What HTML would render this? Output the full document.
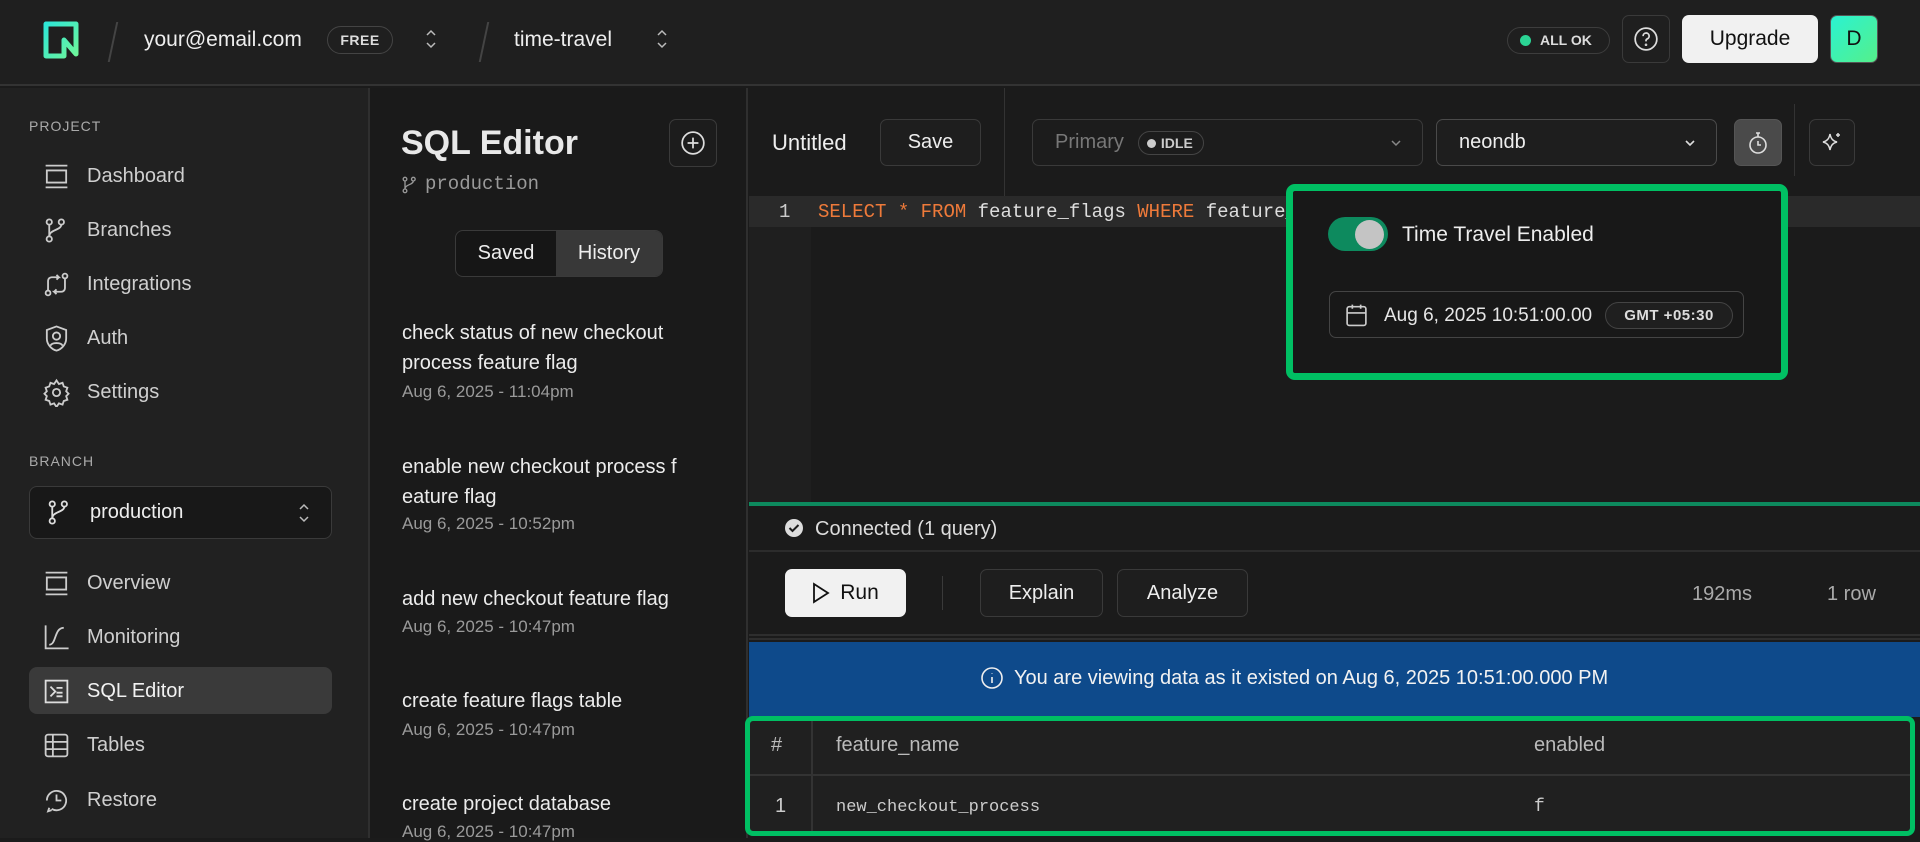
<!DOCTYPE html>
<html><head><meta charset="utf-8"><style>
*{box-sizing:border-box;margin:0;padding:0}
body{width:1920px;height:838px;overflow:hidden;background:#1b1b1b;font-family:"Liberation Sans",sans-serif;color:#e8e8e8;position:relative}
.a{position:absolute}
.mono{font-family:"Liberation Mono",monospace}
.btn{position:absolute;border:1px solid #3a3a3a;border-radius:7px;background:#1e1e1e;display:flex;align-items:center;justify-content:center;font-size:20px;color:#eee}
svg{display:block}
.nav{position:absolute;left:42px;display:flex;align-items:center;gap:16px;font-size:20px;color:#cfcfcf}
.nav svg{width:29px;height:29px}
.hi{position:absolute;left:402px;font-size:20px;color:#ececec;line-height:30px}
.hd{position:absolute;left:402px;font-size:17px;color:#9a9a9a}
</style></head><body>
<!-- header -->
<div class="a" style="left:0;top:0;width:1920px;height:86px;background:#1f1f1f;border-bottom:2px solid #333"></div>
<svg class="a" style="left:42px;top:20px" width="40" height="40" viewBox="0 0 40 40"><defs><linearGradient id="g" x1="0" y1="0" x2="1" y2="1"><stop offset="0" stop-color="#2ee6d6"/><stop offset="1" stop-color="#6ef59a"/></linearGradient></defs><path d="M4 4h30v30l-12-14v16h-18z" fill="none" stroke="url(#g)" stroke-width="5" stroke-linejoin="round"/></svg>
<div class="a" style="left:112px;top:22px;width:2px;height:40px;background:#444;transform:skewX(-12deg)"></div>
<div class="a" style="left:144px;top:28px;font-size:21px;color:#eee">your@email.com</div>
<div class="a" style="left:327px;top:26px;width:66px;height:28px;border:1px solid #444;border-radius:14px;font-size:14px;font-weight:bold;color:#ddd;text-align:center;line-height:26px;letter-spacing:.5px">FREE</div>
<svg class="a" style="left:425px;top:28px" width="12" height="22" viewBox="0 0 12 22" fill="none" stroke="#bbb" stroke-width="1.5"><path d="M2 7l4-4 4 4M2 15l4 4 4-4"/></svg>
<div class="a" style="left:483px;top:22px;width:2px;height:40px;background:#444;transform:skewX(-12deg)"></div>
<div class="a" style="left:514px;top:28px;font-size:21px;color:#eee">time-travel</div>
<svg class="a" style="left:656px;top:28px" width="12" height="22" viewBox="0 0 12 22" fill="none" stroke="#bbb" stroke-width="1.5"><path d="M2 7l4-4 4 4M2 15l4 4 4-4"/></svg>
<div class="a" style="left:1507px;top:27px;width:103px;height:27px;border:1px solid #3d3d3d;border-radius:14px;font-size:14px;font-weight:bold;color:#ddd;line-height:25px;padding-left:32px">ALL OK</div>
<div class="a" style="left:1520px;top:35px;width:11px;height:11px;border-radius:50%;background:#2bd494"></div>
<div class="btn" style="left:1622px;top:15px;width:48px;height:48px;background:#1f1f1f"><svg width="26" height="26" viewBox="0 0 24 24" fill="none" stroke="#ddd" stroke-width="1.6"><circle cx="12" cy="12" r="10"/><path d="M9.3 9.3a2.8 2.8 0 1 1 3.8 2.6c-.8.3-1.1.9-1.1 1.7v.6"/><circle cx="12" cy="17.3" r=".4" fill="#ddd"/></svg></div>
<div class="a" style="left:1682px;top:15px;width:136px;height:48px;background:#f1f1f1;border-radius:7px;color:#111;font-size:21px;text-align:center;line-height:48px">Upgrade</div>
<div class="a" style="left:1830px;top:15px;width:48px;height:48px;border-radius:7px;background:linear-gradient(135deg,#2af2d2,#55f08a);border:1px solid #555;color:#111;font-size:21px;text-align:center;line-height:46px">D</div>

<!-- sidebar -->
<div class="a" style="left:0;top:88px;width:370px;height:750px;background:#212121;border-right:2px solid #2f2f2f"></div>
<div class="a" style="left:29px;top:118px;font-size:14px;letter-spacing:1px;color:#aaa">PROJECT</div>
<div class="nav" style="top:162px"><svg viewBox="0 0 24 24" fill="none" stroke="#ccc" stroke-width="1.5"><path d="M3 3h18M3 21h18M4 7h16v10H4z"/></svg>Dashboard</div>
<div class="nav" style="top:216px"><svg viewBox="0 0 24 24" fill="none" stroke="#ccc" stroke-width="1.5"><circle cx="6" cy="5" r="2.2"/><circle cx="16" cy="5" r="2.2"/><circle cx="6" cy="19" r="2.2"/><path d="M6 7v10M16 7c0 5-10 4-10 10"/></svg>Branches</div>
<div class="nav" style="top:270px"><svg viewBox="0 0 24 24" fill="none" stroke="#ccc" stroke-width="1.5"><circle cx="5" cy="19" r="2"/><circle cx="19" cy="5" r="2"/><path d="M5 17V9a3 3 0 0 1 3-3h6l-2-2M14 6l-2 2M19 7v8a3 3 0 0 1-3 3h-6l2 2M10 18l2-2"/></svg>Integrations</div>
<div class="nav" style="top:324px"><svg viewBox="0 0 24 24" fill="none" stroke="#ccc" stroke-width="1.5"><path d="M12 2l8 3v7c0 5-4 9-8 10-4-1-8-5-8-10V5z"/><circle cx="12" cy="10" r="3"/><path d="M7 18c1-3 9-3 10 0"/></svg>Auth</div>
<div class="nav" style="top:378px"><svg viewBox="0 0 24 24" fill="none" stroke="#ccc" stroke-width="1.5"><circle cx="12" cy="12" r="3"/><path d="M12 2l2 3 3-1 1 3 3 1-1 3 2 2-2 2 1 3-3 1-1 3-3-1-2 3-2-3-3 1-1-3-3-1 1-3-2-2 2-2-1-3 3-1 1-3 3 1z"/></svg>Settings</div>
<div class="a" style="left:29px;top:453px;font-size:14px;letter-spacing:1px;color:#aaa">BRANCH</div>
<div class="a" style="left:29px;top:486px;width:303px;height:53px;background:#181818;border:1px solid #3a3a3a;border-radius:8px"></div>
<div class="nav" style="top:498px;left:45px;color:#eee"><svg viewBox="0 0 24 24" fill="none" stroke="#ddd" stroke-width="1.5"><circle cx="6" cy="5" r="2.2"/><circle cx="16" cy="5" r="2.2"/><circle cx="6" cy="19" r="2.2"/><path d="M6 7v10M16 7c0 5-10 4-10 10"/></svg>production</div>
<svg class="a" style="left:298px;top:502px" width="12" height="22" viewBox="0 0 12 22" fill="none" stroke="#bbb" stroke-width="1.5"><path d="M2 7l4-4 4 4M2 15l4 4 4-4"/></svg>
<div class="nav" style="top:569px"><svg viewBox="0 0 24 24" fill="none" stroke="#ccc" stroke-width="1.5"><path d="M3 3h18M3 21h18M4 7h16v10H4z"/></svg>Overview</div>
<div class="nav" style="top:623px"><svg viewBox="0 0 24 24" fill="none" stroke="#ccc" stroke-width="1.5"><path d="M3 2v19h19M6 18c6 0 4-14 12-14"/></svg>Monitoring</div>
<div class="a" style="left:29px;top:667px;width:303px;height:47px;background:#3a3a3a;border-radius:8px"></div>
<div class="nav" style="top:677px;color:#f2f2f2"><svg viewBox="0 0 24 24" fill="none" stroke="#ddd" stroke-width="1.5"><rect x="3" y="3" width="18" height="18"/><path d="M7 8l4 4-4 4M12 9h5M12 13h5M12 16h5"/></svg>SQL Editor</div>
<div class="nav" style="top:731px"><svg viewBox="0 0 24 24" fill="none" stroke="#ccc" stroke-width="1.5"><rect x="3" y="3" width="18" height="18" rx="2"/><path d="M3 9h18M3 15h18M9 3v18"/></svg>Tables</div>
<div class="nav" style="top:786px"><svg viewBox="0 0 24 24" fill="none" stroke="#ccc" stroke-width="1.5"><path d="M4 12a8 8 0 1 1 4 7M8 20l-3 1 1-3M12 7v5h4"/></svg>Restore</div>

<!-- middle panel -->
<div class="a" style="left:370px;top:88px;width:378px;height:750px;background:#1a1a1a;border-right:2px solid #2f2f2f"></div>
<div class="a" style="left:401px;top:124px;font-size:34px;font-weight:bold;color:#e8e8e8">SQL Editor</div>
<div class="btn" style="left:669px;top:119px;width:48px;height:48px;background:#1c1c1c"><svg width="26" height="26" viewBox="0 0 24 24" fill="none" stroke="#ddd" stroke-width="1.6"><circle cx="12" cy="12" r="10"/><path d="M12 7v10M7 12h10"/></svg></div>
<svg class="a" style="left:400px;top:174px" width="20" height="22" viewBox="0 0 24 24" fill="none" stroke="#999" stroke-width="1.6"><circle cx="6" cy="5" r="2.2"/><circle cx="16" cy="5" r="2.2"/><circle cx="6" cy="19" r="2.2"/><path d="M6 7v10M16 7c0 5-10 4-10 10"/></svg>
<div class="a mono" style="left:425px;top:173px;font-size:19px;color:#9a9a9a">production</div>
<div class="a" style="left:455px;top:230px;width:208px;height:47px;border:1px solid #3a3a3a;border-radius:8px;background:#161616;overflow:hidden;display:flex;font-size:20px">
<div style="width:100px;text-align:center;line-height:45px;color:#eee">Saved</div><div style="flex:1;background:#383838;text-align:center;line-height:45px;color:#eee">History</div></div>
<div class="hi" style="top:318px">check status of new checkout<br>process feature flag</div>
<div class="hd" style="top:382px">Aug 6, 2025 - 11:04pm</div>
<div class="hi" style="top:452px">enable new checkout process f<br>eature flag</div>
<div class="hd" style="top:514px">Aug 6, 2025 - 10:52pm</div>
<div class="hi" style="top:584px">add new checkout feature flag</div>
<div class="hd" style="top:617px">Aug 6, 2025 - 10:47pm</div>
<div class="hi" style="top:686px">create feature flags table</div>
<div class="hd" style="top:720px">Aug 6, 2025 - 10:47pm</div>
<div class="hi" style="top:789px">create project database</div>
<div class="hd" style="top:822px">Aug 6, 2025 - 10:47pm</div>

<!-- editor toolbar -->
<div class="a" style="left:772px;top:130px;font-size:22px;color:#eee">Untitled</div>
<div class="btn" style="left:880px;top:119px;width:101px;height:47px">Save</div>
<div class="a" style="left:1004px;top:88px;width:1px;height:108px;background:#333"></div>
<div class="btn" style="left:1032px;top:119px;width:391px;height:47px;justify-content:flex-start;padding-left:22px;color:#777;background:#1c1c1c">Primary
<span style="margin-left:14px;border:1px solid #444;border-radius:12px;font-size:14px;font-weight:bold;color:#ccc;padding:3px 10px 3px 8px"><span style="display:inline-block;width:9px;height:9px;border-radius:50%;background:#ccc;margin-right:5px"></span>IDLE</span>
<svg style="position:absolute;right:20px;top:19px" width="12" height="8" viewBox="0 0 12 8" fill="none" stroke="#888" stroke-width="1.5"><path d="M2 2l4 4 4-4"/></svg></div>
<div class="btn" style="left:1436px;top:119px;width:281px;height:47px;justify-content:flex-start;padding-left:22px;border-color:#4a4a4a">neondb<svg style="position:absolute;right:20px;top:19px" width="12" height="8" viewBox="0 0 12 8" fill="none" stroke="#ddd" stroke-width="1.6"><path d="M2 2l4 4 4-4"/></svg></div>
<div class="btn" style="left:1734px;top:119px;width:48px;height:47px;background:#4a4a4a;border-color:#555"><svg width="24" height="26" viewBox="0 0 24 26" fill="none" stroke="#ddd" stroke-width="1.6"><circle cx="12" cy="15" r="8"/><path d="M10 3h4M12 3v4M12 11v4h3"/></svg></div>
<div class="a" style="left:1794px;top:104px;width:1px;height:72px;background:#333"></div>
<div class="btn" style="left:1809px;top:119px;width:46px;height:47px"><svg width="24" height="24" viewBox="0 0 24 24" fill="none" stroke="#ddd" stroke-width="1.5"><path d="M10 3c1 5 3 7 7 8-4 1-6 3-7 8-1-5-3-7-7-8 4-1 6-3 7-8zM18 2v4M16 4h4"/></svg></div>

<!-- code area -->
<div class="a" style="left:749px;top:196px;width:62px;height:307px;background:#1f1f1f"></div>
<div class="a" style="left:749px;top:196px;width:1171px;height:31px;background:#2a2a2a"></div>
<div class="a mono" style="left:779px;top:201px;font-size:19px;color:#ccc">1</div>
<div class="a mono" style="left:818px;top:201px;font-size:19px;color:#ddd;white-space:pre"><span style="color:#ee7a3a">SELECT</span> <span style="color:#ee7a3a">*</span> <span style="color:#ee7a3a">FROM</span> feature_flags <span style="color:#ee7a3a">WHERE</span> feature_name = 'new_checkout_process';</div>
<div class="a" style="left:749px;top:502px;width:1171px;height:4px;background:#0d8a5e"></div>

<!-- popover -->
<div class="a" style="left:1286px;top:184px;width:502px;height:196px;background:#181818;border:7px solid #00bf63;border-radius:9px"></div>
<div class="a" style="left:1328px;top:217px;width:60px;height:34px;border-radius:17px;background:#0d8a5e"></div>
<div class="a" style="left:1355px;top:220px;width:29px;height:29px;border-radius:50%;background:#c4c4c4"></div>
<div class="a" style="left:1402px;top:223px;font-size:21px;color:#eee">Time Travel Enabled</div>
<div class="a" style="left:1329px;top:291px;width:415px;height:47px;border:1px solid #444;border-radius:7px"></div>
<svg class="a" style="left:1344px;top:302px" width="25" height="26" viewBox="0 0 24 24" fill="none" stroke="#ccc" stroke-width="1.6"><rect x="3" y="4" width="18" height="18" rx="2"/><path d="M3 10h18M8 2v4M16 2v4"/></svg>
<div class="a" style="left:1384px;top:305px;font-size:19px;color:#e6e6e6">Aug 6, 2025 10:51:00.00</div>
<div class="a" style="left:1605px;top:302px;width:128px;height:27px;border:1px solid #444;border-radius:14px;background:#1f1f1f;font-size:15px;font-weight:bold;color:#ddd;text-align:center;line-height:25px;letter-spacing:.5px">GMT +05:30</div>

<!-- status -->
<svg class="a" style="left:784px;top:518px" width="20" height="20" viewBox="0 0 20 20"><circle cx="10" cy="10" r="9" fill="#ddd"/><path d="M5.5 10l3 3 6-6" fill="none" stroke="#1b1b1b" stroke-width="2"/></svg>
<div class="a" style="left:815px;top:518px;font-size:20px;color:#ddd">Connected (1 query)</div>
<div class="a" style="left:749px;top:550px;width:1171px;height:2px;background:#2c2c2c"></div>
<div class="a" style="left:785px;top:569px;width:121px;height:48px;background:#f1f1f1;border-radius:7px;color:#111;font-size:21px;display:flex;align-items:center;justify-content:center;gap:10px"><svg width="18" height="22" viewBox="0 0 18 22" fill="none" stroke="#111" stroke-width="1.8"><path d="M2 2l14 9-14 9z"/></svg>Run</div>
<div class="a" style="left:942px;top:576px;width:1px;height:34px;background:#3a3a3a"></div>
<div class="btn" style="left:980px;top:569px;width:123px;height:48px">Explain</div>
<div class="btn" style="left:1117px;top:569px;width:131px;height:48px">Analyze</div>
<div class="a" style="left:1692px;top:583px;font-size:20px;color:#aaa">192ms</div>
<div class="a" style="left:1827px;top:583px;font-size:20px;color:#aaa">1 row</div>
<div class="a" style="left:749px;top:634px;width:1171px;height:2px;background:#2e2e2e"></div>
<div class="a" style="left:749px;top:638px;width:1171px;height:2px;background:#2e2e2e"></div>
<div class="a" style="left:749px;top:642px;width:1171px;height:75px;background:#0e4a8b"></div>
<div class="a" style="left:980px;top:666px;display:flex;align-items:center;gap:10px;font-size:20px;color:#f2f2f2"><svg width="24" height="24" viewBox="0 0 24 24" fill="none" stroke="#eee" stroke-width="1.6"><circle cx="12" cy="12" r="10"/><path d="M12 11v6M12 7v.5"/></svg>You are viewing data as it existed on Aug 6, 2025 10:51:00.000 PM</div>

<!-- table -->
<div class="a" style="left:745px;top:716px;width:1170px;height:120px;border:5px solid #00bf63;border-radius:8px;background:#202020"></div>
<div class="a" style="left:750px;top:774px;width:1160px;height:2px;background:#333"></div>
<div class="a" style="left:811px;top:721px;width:2px;height:110px;background:#333"></div>
<div class="a" style="left:771px;top:734px;font-size:20px;color:#bbb">#</div>
<div class="a" style="left:836px;top:734px;font-size:20px;color:#bbb">feature_name</div>
<div class="a" style="left:1534px;top:734px;font-size:20px;color:#bbb">enabled</div>
<div class="a" style="left:775px;top:795px;font-size:20px;color:#ccc">1</div>
<div class="a mono" style="left:836px;top:798px;font-size:17px;color:#ccc">new_checkout_process</div>
<div class="a mono" style="left:1534px;top:797px;font-size:18px;color:#ccc">f</div>
</body></html>
